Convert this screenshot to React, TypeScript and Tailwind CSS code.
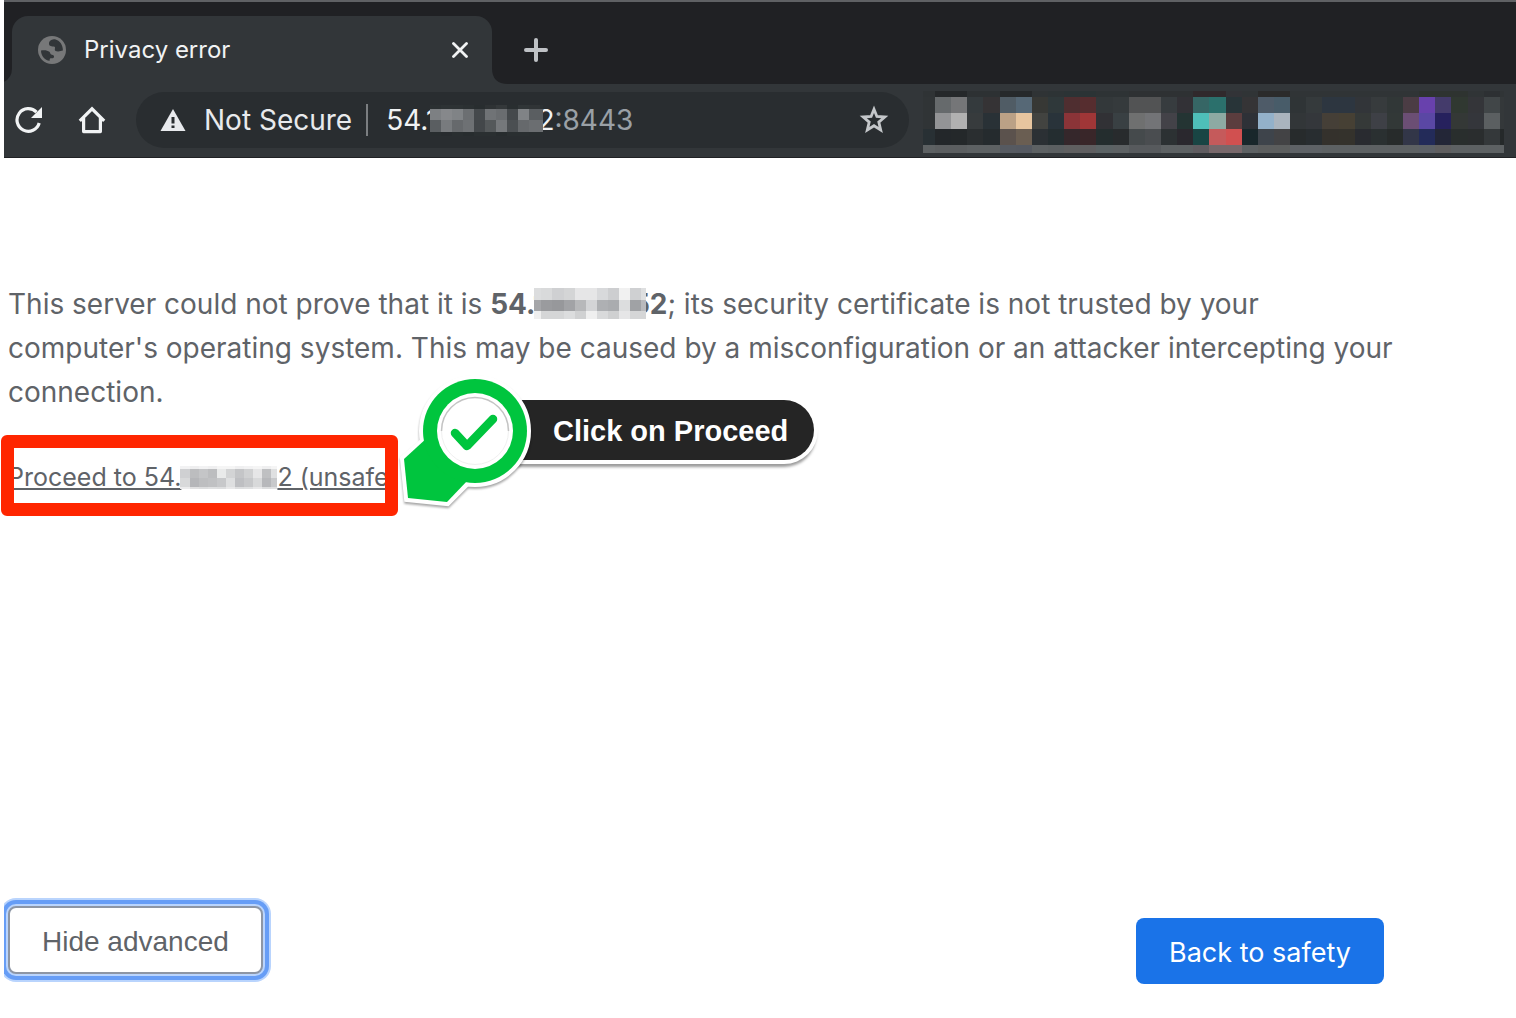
type MosaicProps = {
  widths: number[];
  heights: number[];
  rows: string[];
  label: string;
  className?: string;
};

/* Pixelated block; each row is a space-separated list of hex colours. */
function Mosaic({ widths, heights, rows, label, className }: MosaicProps) {
  const total = widths.reduce((a, b) => a + b, 0);
  const tall = heights.reduce((a, b) => a + b, 0);
  let y = 0;
  const cells = rows.flatMap((row, r) => {
    let x = 0;
    const top = y;
    y += heights[r];
    return row.split(" ").map((color, c) => {
      const left = x;
      x += widths[c];
      return (
        <rect key={`${r}-${c}`} x={left} y={top} width={widths[c]} height={heights[r]} fill={`#${color}`} />
      );
    });
  });
  return (
    <svg
      role="img"
      aria-label={label}
      width={total}
      height={tall}
      viewBox={`0 0 ${total} ${tall}`}
      shapeRendering="crispEdges"
      className={className}
    >
      {cells}
    </svg>
  );
}

const EXT_WIDTHS = [12, ...Array.from({ length: 35 }, (_, i) => Math.round((i + 1) * 16.14) - Math.round(i * 16.14)), 4];

const EXT_ROWS = [
  "2f3335 25282a 25282a 2d3133 2d3133 26292b 26292b 2f3335 2d3335 2b3335 2b3335 2e3335 2e3335 2e3133 2e3133 2e3133 2e3133 30292c 30292c 323337 303436 2b2b2b 2b2b2b 303436 303436 303436 303436 303436 303436 303436 303436 2e3330 2e3330 2e3330 303436 2d3033 303436",
  "303436 666a6c 757678 343a3d 353335 505c65 566876 373835 2f383a 4f2e30 562d2f 33383a 353a3c 525354 525354 373c3f 323136 366665 2b706c 283438 353436 4e5b68 485c69 2f3436 353a3c 2d3640 2d3640 323539 373b3d 313737 4b3c44 6841ad 443b6b 303831 343539 414648 34383a",
  "303436 939496 b1b1b1 373b3d 293136 bba186 e7c59f 424340 29333a 8b3438 a03637 313135 394043 6f7070 737477 434248 243433 4ebfb9 8daaa3 5b3d3e 2e3137 93b1ca aab4be 323638 34373b 453f37 464034 353938 3e4046 323837 6b4e74 5a47a4 26215d 343836 34363b 5b5f61 34383a",
  "283034 23272a 24282a 2a2e30 252b2e 5b524d 6a5e52 2b3034 242d30 35272b 392629 242d2e 282b2d 454a4c 4a4d50 2c3133 2a282e 194544 c55a5b d15050 19272b 3e444b 434345 272b2c 282d30 34312c 34322c 292b30 2a3031 272b2b 323648 232b59 232637 292e2d 2a2d2e 34383a 25292a",
  "5d6163 5b5e60 5b5e60 5d6163 5d6163 565a61 555961 5d6163 5b5f61 5f5f60 5f5e60 5b6264 5d6163 575a5d 575a5d 5d6163 5d6163 5f5c60 78686b 78686b 5d6163 5c5e5e 5c5e5e 5e6266 5e6266 5d6163 5d6163 5d6163 5d6163 5d6163 5d6163 5c6066 5f5e5f 5d6163 5d6163 5d6163 5d6163",
];

const DARK_ROWS = [
  "2b3032 2d3234 2d3234 2b3032 282d2f 2e3234 34383a 292e30 303537 303436 2b3032",
  "7d8083 86888b 808386 6c6f72 45494c 707376 6a6d70 45494c 808386 5a5e61 5a5e61",
  "5a5e61 787b7e 66696c 6e7174 43474a 54585a 75787b 4b4f52 66696c 6b6e71 6b6e71",
  "282d2f 272b2e 292e30 272c2e 2a2f31 2a2f31 272c2e 2a2f31 2a2f31 292e30 292e30",
];

const LIGHT_ROWS = [
  "dcddde d9dadb cfd0d2 d4d5d6 e6e6e7 e6e6e7 d8d9db cdced0 f1f1f1 cfd0d2 dedfe0",
  "a5a6a9 9a9b9e 97989b a2a3a6 b7b8ba d3d4d6 aeb0b3 aaacaf dcddde a0a2a5 b9babd",
  "efefef d5d6d7 d5d6d7 dcddde d0d1d2 efefef d9dadb cfd0d1 e6e6e7 d5d6d7 d5d6d7",
];

const LINK_ROWS = [
  "f2f2f3 eeeeef f2f2f3 efeff0 f5f5f5 f5f5f5 efeff0 f2f2f3 f5f5f5 efeff0 f5f5f5",
  "cfd0d2 bcbdbf c4c5c7 bcbdbf e9eaea d3d4d5 c4c5c7 d0d1d2 e6e6e7 bfc0c2 dfe0e1",
  "d8d9da b5b6b9 bdbec0 c0c1c3 c7c8ca dedfe0 bebfc2 c7c8ca d8d9da b7b8bb c8c9cb",
  "ebebec e0e0e1 dcddde dfe0e1 dddedf e8e8e9 dddedf dfe0e1 e8e8e9 dcddde e0e0e1",
];

function TabStrip() {
  return (
    <div className="flex h-[84px] items-end border-t-2 border-[#5f6164] bg-[#202124]">
      <svg width="8" height="16" viewBox="0 0 8 16" className="shrink-0 text-[#323639]" aria-hidden="true">
        <path d="M8 0v16H0v-2.2Q8 10 8 0Z" fill="currentColor" />
      </svg>
      <div className="flex h-[68px] w-[480px] items-center rounded-t-2xl bg-[#323639] pr-5 pl-[26px]">
        <svg width="28" height="28" viewBox="0 0 28 28" aria-hidden="true">
          <circle cx="14" cy="14" r="14" fill="#777879" />
          <path
            d="M17 3.200C14 3.400 11.200 4.400 11 7.200c-.2 2.600 1.600 3.200 4.600 3.200 1.800 0 1.500 1.400 1.200 2.800-.3 1.600 1.200 2.200 3.200 2.300 2 .1 3-.9 4.900-1C25 9 22 4.600 17 3.200Z"
            fill="#323639"
          />
          <path
            d="M3 14.400c3.500-.5 6.600-.3 8.400 1.400 1 1 .7 2.600 2.400 2.900 1.700.3 2.400.7 2.200 2.200-.2 1.400-1.600 1.200-3.400 1.300-.8.1-1 .8-.9 2.500C6.800 24 3 20 3 14.400Z"
            fill="#323639"
          />
        </svg>
        <span className="ml-[18px] flex-1 text-2xl text-[#f1f3f4]">Privacy error</span>
        <button aria-label="Close tab" className="p-1">
          <svg width="16" height="16" viewBox="0 0 16 16" fill="none" stroke="#f1f3f4" strokeWidth="2.8" strokeLinecap="round">
            <path d="M1.500 1.500l13 13M14.500 1.500l-13 13" />
          </svg>
        </button>
      </div>
      <svg width="16" height="16" viewBox="0 0 16 16" className="shrink-0 text-[#323639]" aria-hidden="true">
        <path d="M0 0Q0 16 16 16H0Z" fill="currentColor" />
      </svg>
      <button aria-label="New tab" className="mb-[22px] ml-4">
        <svg width="24" height="24" viewBox="0 0 24 24" fill="none" stroke="#bfc2c6" strokeWidth="4" strokeLinecap="round">
          <path d="M12 2v20M2 12h20" />
        </svg>
      </button>
    </div>
  );
}

function Toolbar() {
  return (
    <div className="flex h-[74px] items-start border-b border-[#202124] bg-[#323639] pt-2 pr-3">
      <div className="flex h-14 min-w-0 flex-1 items-center">
        <button aria-label="Reload" className="ml-[10px]">
          <svg width="28" height="28" viewBox="0 0 28 28" fill="none">
            <path d="M25.200 17A11.300 11.300 0 1 1 22.500 6.200" stroke="#f1f3f4" strokeWidth="3.200" />
            <path d="M28 1v11H17Z" fill="#f1f3f4" />
          </svg>
        </button>
        <button aria-label="Home" className="ml-9">
          <svg width="28" height="28" viewBox="0 0 28 28" fill="none" stroke="#f1f3f4" strokeWidth="3.200">
            <path d="M1.800 14.800 14 2.800 26.200 14.800" />
            <path d="M5.600 12v13.600h16.800V12" strokeLinejoin="round" />
          </svg>
        </button>
        <div className="ml-[30px] flex h-14 min-w-0 flex-1 items-center rounded-full bg-[#292d30] pr-5 pl-6 text-[28px] whitespace-nowrap">
          <svg width="26" height="22" viewBox="0 0 26 22" className="shrink-0" aria-hidden="true">
            <path d="M13 0 25.500 22H.5Z" fill="#e8eaed" />
            <path d="M11.500 8h3v6.500h-3zM11.500 16.500h3V19h-3z" fill="#292d30" />
          </svg>
          <span className="ml-[18px] text-[#e8eaed]">Not Secure</span>
          <span className="mr-[18px] ml-[14px] h-8 w-[2px] bg-[#7b7e81]" />
          <span className="flex items-center text-[#f1f3f4]">
            54.1
            <Mosaic
              label="Hidden address"
              widths={[11, 11, 11, 11, 11, 11, 11, 11, 11, 11, 3]}
              heights={[4, 11, 12, 4]}
              rows={DARK_ROWS}
              className="relative -ml-[7px]"
            />
            <span className="-ml-[6px]">2</span>
            <span className="text-[#9aa0a6]">:8443</span>
          </span>
          <button aria-label="Bookmark this page" className="ml-auto">
            <svg width="30" height="30" viewBox="0 0 30 30" fill="none" stroke="#c4c7ca" strokeWidth="2.800">
              <path d="M15 4.200 17.900 11.400 25.800 12 19.800 17.100 21.700 24.900 15 20.700 8.300 24.900 10.200 17.100 4.200 12 12.100 11.400Z" />
            </svg>
          </button>
        </div>
      </div>
      <Mosaic
        label="Extensions"
        widths={EXT_WIDTHS}
        heights={[6, 16, 16, 16, 8]}
        rows={EXT_ROWS}
        className="-mt-px ml-[14px] shrink-0"
      />
    </div>
  );
}

function Callout() {
  return (
    <div className="absolute -top-[60px] left-[398px] flex h-[136px] items-start">
      <svg width="136" height="136" viewBox="399 375 136 136" className="relative z-10 drop-shadow-[0_2px_1px_rgba(0,0,0,0.35)]" aria-hidden="true">
        <g fill="#00c53e" stroke="#fff" strokeWidth="8">
          <path d="M427 439 404 459 408 498 447 502 468 481Z" />
          <circle cx="475" cy="431" r="52" />
        </g>
        <path d="M428 437 404 459 408 498 447 502 468 480Z" fill="#00c53e" />
        <circle cx="475" cy="431" r="52" fill="#00c53e" />
        <circle cx="475" cy="431" r="38" fill="#fff" />
        <path d="M441.500 431a33.500 33.500 0 0 1 67 0" fill="none" stroke="#c4c4c4" strokeWidth="1.500" />
        <path d="M441.500 431a33.500 33.500 0 0 0 67 0" fill="none" stroke="#f0f0f0" />
        <path d="M455 433 467 446 493 419" fill="none" stroke="#00c53e" strokeWidth="8.500" strokeLinecap="round" strokeLinejoin="round" />
      </svg>
      <div className="mt-[25px] -ml-[60px] flex h-[60px] items-center rounded-r-full bg-[#252525] pr-[26px] pl-[78px] font-['Liberation_Sans',sans-serif] text-[29px] font-bold whitespace-nowrap text-white shadow-[0_0_0_4px_#fff,0_5px_3px_2px_rgba(0,0,0,0.4)]">
        <span className="pt-1">Click on Proceed</span>
      </div>
    </div>
  );
}

export default function App() {
  return (
    <div className="min-h-screen bg-white font-['Inter',sans-serif]">
      <header className="ml-1">
        <TabStrip />
        <Toolbar />
      </header>
      <main className="pt-[124px] text-[#5f6368]">
        <p className="max-w-[1404px] pl-2 text-[28px] leading-[44px]">
          This server could not prove that it is{" "}
          <span className="whitespace-nowrap">
            <b>54.1</b>
            <Mosaic
              label="Hidden address"
              widths={[7, 11, 12, 11, 11, 11, 11, 11, 11, 11, 5]}
              heights={[12, 11, 8]}
              rows={LIGHT_ROWS}
              className="relative -mt-[6px] -ml-[11px] inline-block align-middle"
            />
            <b className="-ml-[14px]">52</b>;
          </span>{" "}
          its security certificate is not trusted by your computer's operating system. This may be caused by a
          misconfiguration or an attacker intercepting your connection.
        </p>
        <div className="relative mt-[21px] ml-px">
          <div className="flex h-[81px] w-[397px] items-center overflow-hidden rounded-md border-[13px] border-[#ff2600]">
            <a
              href="#proceed"
              className="-ml-[6px] flex items-center pt-1 text-[25px] whitespace-nowrap underline decoration-2 underline-offset-2"
            >
              Proceed to 54.
              <Mosaic
                label="Hidden address"
                widths={[10, 9, 9, 9, 9, 9, 9, 9, 9, 9, 6]}
                heights={[3, 9, 9, 2]}
                rows={LINK_ROWS}
                className="-ml-px"
              />
              2 (unsafe)
            </a>
          </div>
          <Callout />
        </div>
        <div className="mt-[382px] ml-1 flex max-w-[1380px] items-start justify-between overflow-hidden py-2 pl-1">
          <button className="h-[68px] rounded-lg border-2 border-[#8d96a5] bg-white px-8 pt-1 font-['Liberation_Sans',sans-serif] text-[28px] shadow-[0_0_0_2px_#b9d4fd,0_0_0_6px_#669df6,0_0_0_8px_#b9d4fd]">
            Hide advanced
          </button>
          <button className="mt-3 h-[66px] w-[248px] rounded-lg bg-[#1a73e8] pt-1 text-[27px] text-white">Back to safety</button>
        </div>
      </main>
    </div>
  );
}
